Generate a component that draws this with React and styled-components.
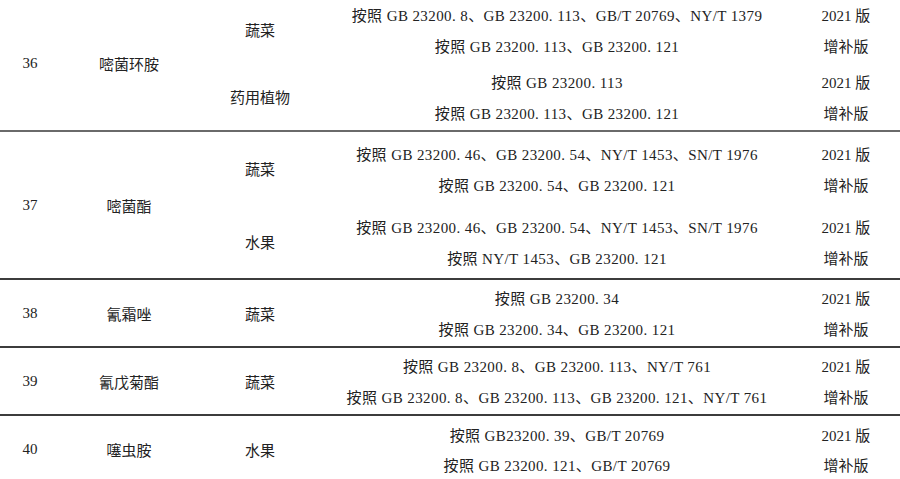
import React from "react";
import styled, { createGlobalStyle } from "styled-components";

const GlobalStyle = createGlobalStyle`
    html, body {
        margin: 0;
        padding: 0;
        background: #ffffff;
        overflow: hidden;
    }
    body {
        font-family: "Liberation Serif", "Noto Sans CJK SC", serif;
        font-size: 15px;
        color: #222222;
    }
`;

const Table = styled.div`
    width: 900px;
    margin-top: -4px;
`;

const Row = styled.div`
    display: grid;
    grid-template-columns: 60px 138px 1fr;
    height: ${(p) => p.height}px;
    border-bottom: ${(p) => (p.last ? "none" : `2px solid ${p.rule || "#3c3c3c"}`)};
`;

const Cell = styled.div`
    display: flex;
    align-items: center;
    justify-content: center;
    white-space: nowrap;
`;

const Groups = styled.div`
    display: flex;
    flex-direction: column;
`;

const Group = styled.div`
    flex: 1;
    display: grid;
    grid-template-columns: 124px 1fr;
`;

const Lines = styled.div`
    display: flex;
    flex-direction: column;
    justify-content: center;
`;

const Line = styled.div`
    display: grid;
    grid-template-columns: 470px 108px;
    height: ${(p) => p.pitch || 31}px;
    align-items: center;
    text-align: center;
    white-space: nowrap;
`;

const Method = styled.span`
    letter-spacing: 0.4px;
`;

const rows = [
    {
        no: "36",
        name: "嘧菌环胺",
        height: 134,
        rule: "#6a6a6a",
        groups: [
            {
                cat: "蔬菜",
                lines: [
                    ["按照 GB 23200. 8、GB 23200. 113、GB/T 20769、NY/T 1379", "2021 版"],
                    ["按照 GB 23200. 113、GB 23200. 121", "增补版"]
                ]
            },
            {
                cat: "药用植物",
                lines: [
                    ["按照 GB 23200. 113", "2021 版"],
                    ["按照 GB 23200. 113、GB 23200. 121", "增补版"]
                ]
            }
        ]
    },
    {
        no: "37",
        name: "嘧菌酯",
        height: 146,
        groups: [
            {
                cat: "蔬菜",
                lines: [
                    ["按照 GB 23200. 46、GB 23200. 54、NY/T 1453、SN/T 1976", "2021 版"],
                    ["按照 GB 23200. 54、GB 23200. 121", "增补版"]
                ]
            },
            {
                cat: "水果",
                lines: [
                    ["按照 GB 23200. 46、GB 23200. 54、NY/T 1453、SN/T 1976", "2021 版"],
                    ["按照 NY/T 1453、GB 23200. 121", "增补版"]
                ]
            }
        ]
    },
    {
        no: "38",
        name: "氰霜唑",
        height: 66,
        groups: [
            {
                cat: "蔬菜",
                lines: [
                    ["按照 GB 23200. 34", "2021 版"],
                    ["按照 GB 23200. 34、GB 23200. 121", "增补版"]
                ]
            }
        ]
    },
    {
        no: "39",
        name: "氰戊菊酯",
        height: 66,
        groups: [
            {
                cat: "蔬菜",
                lines: [
                    ["按照 GB 23200. 8、GB 23200. 113、NY/T 761", "2021 版"],
                    ["按照 GB 23200. 8、GB 23200. 113、GB 23200. 121、NY/T 761", "增补版"]
                ]
            }
        ]
    },
    {
        no: "40",
        name: "噻虫胺",
        height: 66,
        last: true,
        pitch: 30,
        groups: [
            {
                cat: "水果",
                lines: [
                    ["按照 GB23200. 39、GB/T 20769", "2021 版"],
                    ["按照 GB 23200. 121、GB/T 20769", "增补版"]
                ]
            }
        ]
    }
];

const App = () => (
    <>
        <GlobalStyle />
        <Table>
            {rows.map((row) => (
                <Row key={row.no} height={row.height} last={row.last} rule={row.rule}>
                    <Cell>{row.no}</Cell>
                    <Cell>{row.name}</Cell>
                    <Groups>
                        {row.groups.map((g, i) => (
                            <Group key={i}>
                                <Cell>{g.cat}</Cell>
                                <Lines>
                                    {g.lines.map(([method, version], j) => (
                                        <Line key={j} pitch={row.pitch}>
                                            <Method>{method}</Method>
                                            <span>{version}</span>
                                        </Line>
                                    ))}
                                </Lines>
                            </Group>
                        ))}
                    </Groups>
                </Row>
            ))}
        </Table>
    </>
);

export default App;
